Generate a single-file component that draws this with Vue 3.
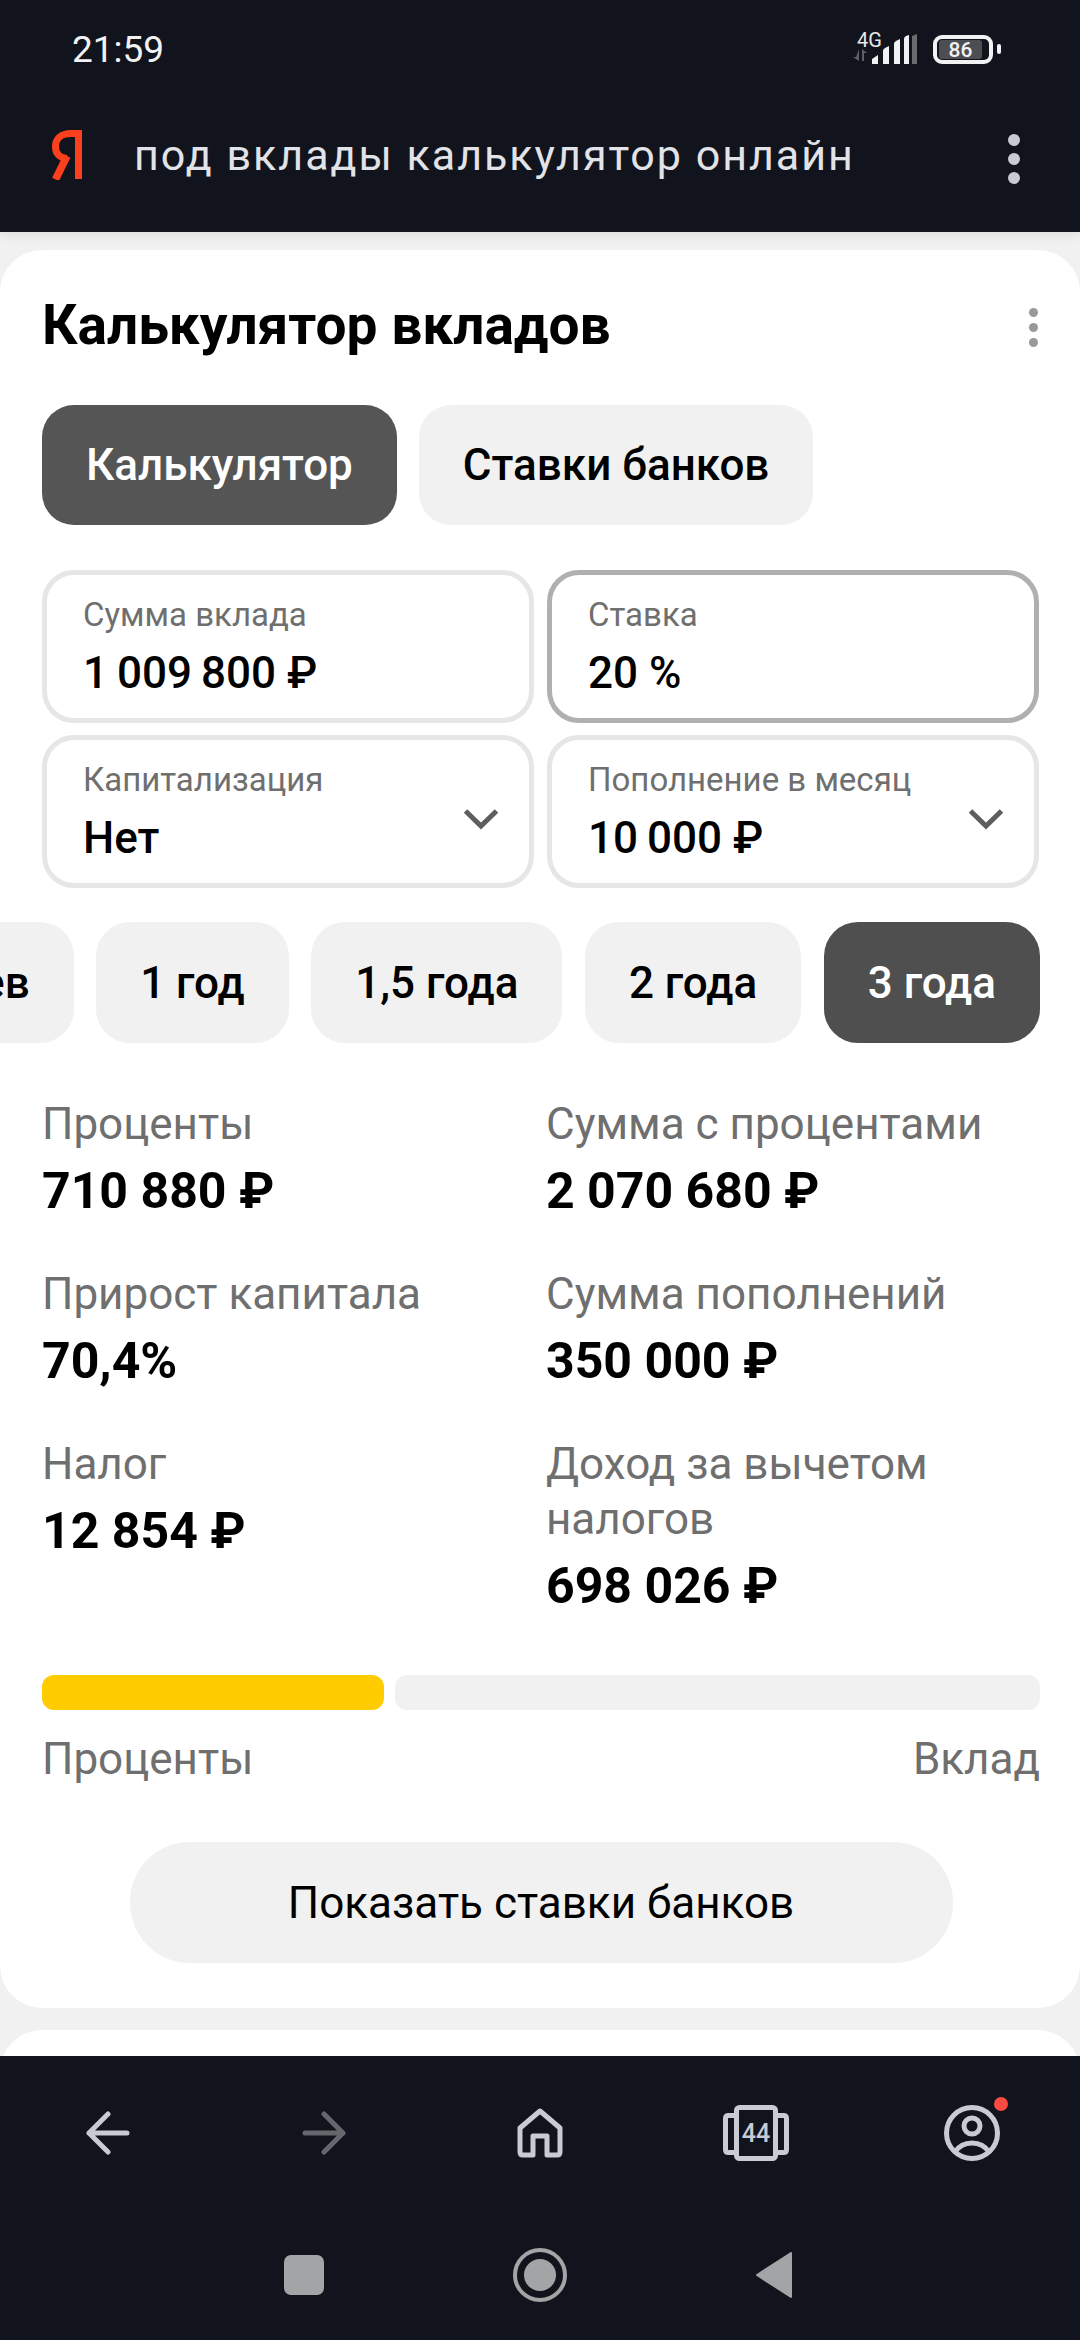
<script setup>
const fields = [
  { label: "Сумма вклада", value: "1\u2009009\u2009800 ₽" },
  { label: "Ставка", value: "20 %", active: true },
  { label: "Капитализация", value: "Нет", select: true },
  { label: "Пополнение в месяц", value: "10\u2009000 ₽", select: true },
];

const periods = ["6 месяцев", "1 год", "1,5 года", "2 года", "3 года"];

const leftStats = [
  { label: "Проценты", value: "710 880 ₽" },
  { label: "Прирост капитала", value: "70,4%" },
  { label: "Налог", value: "12 854 ₽" },
];

const rightStats = [
  { label: "Сумма с процентами", value: "2 070 680 ₽" },
  { label: "Сумма пополнений", value: "350 000 ₽" },
  { label: "Доход за вычетом налогов", value: "698 026 ₽" },
];
</script>

<template>
  <div class="screen">
    <header class="top">
      <div class="status">
        <span class="time">21:59</span>
        <div class="status-icons">
          <div class="net">
            <span class="net-label">4G</span>
            <svg class="signal" width="66" height="31" viewBox="0 0 66 31">
              <path d="M7 15v12l-6-4h3zM10 15v12h2V19h3z" fill="#5f6065" />
              <path d="M20 30v-5l6-4v9zM31 30V17q0-2 2-3l4-2v18zM42 30V10q0-2 2-3l4-2v25zM52 30V5q0-2 2-3l3-1v29z" fill="#f2f2f4" />
              <path d="M60 30V2l5-2v30z" fill="#6b6c70" />
            </svg>
          </div>
          <div class="battery">
            <span class="battery-level">86</span>
          </div>
          <span class="battery-tip"></span>
        </div>
      </div>
      <div class="search">
        <svg class="logo" width="32" height="50" viewBox="0 0 32 50">
          <path d="M27.500 49V3.500H20C10 3.500 4.500 9 4.500 16.500c0 7 4 11.500 11.500 12" fill="none" stroke="#fc3f1d" stroke-width="7" />
          <path d="M16 26 4.500 49.500" fill="none" stroke="#fc3f1d" stroke-width="7.500" />
        </svg>
        <span class="query">под вклады калькулятор онлайн</span>
        <div class="dots">
          <i></i><i></i><i></i>
        </div>
      </div>
    </header>

    <main class="page">
      <section class="card">
        <div class="card-head">
          <h1>Калькулятор вкладов</h1>
          <div class="dots small">
            <i></i><i></i><i></i>
          </div>
        </div>

        <div class="tabs">
          <button class="pill selected">Калькулятор</button>
          <button class="pill">Ставки банков</button>
        </div>

        <div class="fields">
          <div
            v-for="f in fields"
            :key="f.label"
            class="field"
            :class="{ active: f.active }"
          >
            <div class="field-label">{{ f.label }}</div>
            <div class="field-value">{{ f.value }}</div>
            <svg v-if="f.select" class="chevron" width="36" height="22" viewBox="0 0 36 22">
              <path d="M2.500 3 18 18 33.500 3" fill="none" stroke="#5e5e5e" stroke-width="5" />
            </svg>
          </div>
        </div>

        <div class="periods">
          <button
            v-for="p in periods"
            :key="p"
            class="chip"
            :class="{ selected: p === '3 года' }"
          >
            {{ p }}
          </button>
        </div>

        <div class="stats">
          <div class="stats-col">
            <div v-for="s in leftStats" :key="s.label" class="stat">
              <div class="stat-label">{{ s.label }}</div>
              <div class="stat-value">{{ s.value }}</div>
            </div>
          </div>
          <div class="stats-col">
            <div v-for="s in rightStats" :key="s.label" class="stat">
              <div class="stat-label">{{ s.label }}</div>
              <div class="stat-value">{{ s.value }}</div>
            </div>
          </div>
        </div>

        <div class="bar">
          <div class="bar-part yellow"></div>
          <div class="bar-part rest"></div>
        </div>
        <div class="bar-labels">
          <span>Проценты</span>
          <span>Вклад</span>
        </div>

        <button class="show-btn">Показать ставки банков</button>
      </section>
      <section class="card-next"></section>
    </main>

    <footer class="bottom">
      <nav class="browser-nav">
        <svg width="44" height="44" viewBox="0 0 44 44">
          <path d="M41 22H3M22 3 3 22l19 19" fill="none" stroke="#c9cad4" stroke-width="5" stroke-linecap="round" stroke-linejoin="round" />
        </svg>
        <svg width="44" height="44" viewBox="0 0 44 44">
          <path d="M3 22h38M22 3l19 19-19 19" fill="none" stroke="#66676c" stroke-width="5" stroke-linecap="round" stroke-linejoin="round" />
        </svg>
        <svg width="46" height="50" viewBox="0 0 46 50">
          <path d="M3 20 23 3l20 17v24q0 3-3 3H30V28H16v19H6q-3 0-3-3z" fill="none" stroke="#c9cad4" stroke-width="5" stroke-linejoin="round" />
        </svg>
        <div class="tabs-icon">
          <svg width="66" height="56" viewBox="0 0 66 56">
            <rect x="13.500" y="2.500" width="39" height="51" rx="3" fill="none" stroke="#c9cad4" stroke-width="5" />
            <path d="M12 10.500H5.500q-3 0-3 3v31q0 3 3 3H12M54 10.500h6.500q3 0 3 3v31q0 3-3 3H54" fill="none" stroke="#c9cad4" stroke-width="5" />
          </svg>
          <span class="tabs-count">44</span>
        </div>
        <div class="profile">
          <svg width="56" height="56" viewBox="0 0 56 56">
            <circle cx="28" cy="28" r="25.500" fill="none" stroke="#c9cad4" stroke-width="5" />
            <circle cx="28" cy="21" r="8" fill="none" stroke="#c9cad4" stroke-width="5" />
            <path d="M11 47c4-6 10-9 17-9s13 3 17 9" fill="none" stroke="#c9cad4" stroke-width="5" />
          </svg>
          <span class="badge"></span>
        </div>
      </nav>
      <nav class="system-nav">
        <span class="sys-square"></span>
        <span class="sys-circle"><i></i></span>
        <svg width="38" height="46" viewBox="0 0 38 46">
          <path d="M36 1v44L2 23z" fill="#a3a4a6" stroke="#a3a4a6" stroke-width="2" stroke-linejoin="round" />
        </svg>
      </nav>
    </footer>
  </div>
</template>

<style scoped>
.screen {
  width: 1080px;
  height: 2340px;
  display: flex;
  flex-direction: column;
  overflow: hidden;
  background: #f1f1f1;
  font-family: Roboto, "Liberation Sans", sans-serif;
  color: #000;
}

/* top */
.top {
  height: 232px;
  flex-shrink: 0;
  background: #11141c;
  box-shadow: 0 4px 10px rgba(0, 0, 0, 0.08);
  position: relative;
  z-index: 1;
}

.status {
  height: 98px;
  padding: 0 79px 0 72px;
  display: flex;
  align-items: center;
  justify-content: space-between;
  box-sizing: border-box;
}

.time {
  font-size: 37px;
  color: #f2f2f4;
}

.status-icons {
  display: flex;
  align-items: center;
}

.net {
  width: 65px;
  height: 31px;
  position: relative;
  margin-right: 16px;
}

.net-label {
  position: absolute;
  left: 5px;
  top: -6px;
  font-size: 20px;
  color: #e8e8ea;
}

.signal {
  position: absolute;
  left: 0;
  bottom: 0;
}

.battery {
  width: 60px;
  height: 29px;
  box-sizing: border-box;
  border: 4px solid #f2f2f4;
  border-radius: 9px;
  display: flex;
  align-items: center;
  padding-left: 2px;
}

.battery-level {
  flex: 0 0 43px;
  height: 19px;
  background: #4d4e53;
  border-radius: 3px;
  color: #f2f2f4;
  font-size: 21px;
  font-weight: 500;
  line-height: 20px;
  text-align: center;
}

.battery-tip {
  width: 4px;
  height: 10px;
  border-radius: 2px;
  background: #f2f2f4;
  margin-left: 4px;
}

.search {
  height: 114px;
  padding-left: 51px;
  padding-right: 60px;
  display: flex;
  align-items: center;
}

.logo {
  flex-shrink: 0;
}

.query {
  margin-left: 51px;
  font-size: 43px;
  letter-spacing: 2px;
  color: #e2e3e8;
  white-space: nowrap;
  flex: 1;
}

.dots {
  display: flex;
  flex-direction: column;
  gap: 7px;
  margin-top: 8px;
}

.dots i {
  width: 12px;
  height: 12px;
  border-radius: 50%;
  background: #c9cad4;
}

.dots.small {
  gap: 6px;
  margin: 0;
}

.dots.small i {
  width: 9px;
  height: 9px;
  background: #999;
}

/* card */
.page {
  flex: 1;
  padding-top: 18px;
  display: flex;
  flex-direction: column;
  gap: 22px;
  overflow: hidden;
}

.card {
  height: 1758px;
  flex-shrink: 0;
  box-sizing: border-box;
  background: #fff;
  border-radius: 42px;
  padding: 0 40px 0 42px;
  overflow: hidden;
}

.card-next {
  height: 60px;
  flex-shrink: 0;
  background: #fff;
  border-radius: 42px 42px 0 0;
}

.card-head {
  height: 155px;
  display: flex;
  align-items: center;
  justify-content: space-between;
  padding-right: 2px;
  padding-bottom: 6px;
  box-sizing: border-box;
}

.card-head .dots {
  margin-top: 6px;
}

h1 {
  margin: 0;
  font-size: 55px;
  font-weight: 700;
  letter-spacing: 0;
}

button {
  font-family: inherit;
  border: none;
  cursor: pointer;
  color: #000;
}

.tabs {
  display: flex;
  gap: 22px;
}

.pill {
  height: 120px;
  padding: 0 44px;
  border-radius: 32px;
  background: #f1f1f1;
  font-size: 44px;
  font-weight: 500;
}

.selected {
  background: #555;
  color: #fff;
}

.fields {
  margin-top: 45px;
  display: grid;
  grid-template-columns: 492px 492px;
  column-gap: 13px;
  row-gap: 12px;
}

.field {
  height: 153px;
  box-sizing: border-box;
  border: 5px solid #e6e6e6;
  border-radius: 32px;
  padding: 21px 36px 0;
  position: relative;
}

.field.active {
  border-color: #b0b0b0;
}

.field-label {
  font-size: 33px;
  line-height: 38px;
  color: #6f6f6f;
}

.field-value {
  margin-top: 15px;
  font-size: 44px;
  line-height: 48px;
  font-weight: 500;
}

.chevron {
  position: absolute;
  right: 30px;
  top: 68px;
}

.periods {
  margin-top: 34px;
  display: flex;
  justify-content: flex-end;
  gap: 22.5px;
}

.chip {
  flex-shrink: 0;
  height: 121px;
  padding: 0 44px;
  border-radius: 34px;
  background: #f1f1f1;
  font-size: 44px;
  font-weight: 500;
  white-space: nowrap;
}

.chip.selected {
  background: #4f4f4f;
  color: #fff;
}

.stats {
  margin-top: 54px;
  display: grid;
  grid-template-columns: 504px 1fr;
}

.stats-col {
  display: flex;
  flex-direction: column;
  gap: 46px;
}

.stat-label {
  font-size: 44px;
  line-height: 55px;
  color: #6f6f6f;
}

.stat-value {
  margin-top: 9px;
  font-size: 50px;
  line-height: 60px;
  font-weight: 700;
}

.bar {
  margin-top: 59px;
  display: flex;
  gap: 11px;
}

.bar-part {
  height: 35px;
  border-radius: 12px;
}

.yellow {
  width: 342px;
  background: #fc0;
}

.rest {
  flex: 1;
  background: #f1f1f1;
}

.bar-labels {
  margin-top: 24px;
  display: flex;
  justify-content: space-between;
  font-size: 44px;
  line-height: 50px;
  color: #6f6f6f;
}

.show-btn {
  display: block;
  margin: 58px auto 0;
  width: 823px;
  height: 121px;
  border-radius: 60px;
  background: #f1f1f1;
  font-size: 44px;
}

/* bottom */
.bottom {
  height: 284px;
  flex-shrink: 0;
  background: #11141c;
  position: relative;
  z-index: 1;
}

.browser-nav {
  height: 154px;
  display: grid;
  grid-template-columns: repeat(5, 216px);
  align-items: center;
  justify-items: center;
}

.tabs-icon {
  position: relative;
  width: 66px;
  height: 56px;
}

.tabs-count {
  position: absolute;
  inset: 0;
  text-align: center;
  font-size: 25px;
  font-weight: 500;
  line-height: 58px;
  color: #c9cad4;
}

.profile {
  position: relative;
  width: 56px;
  height: 56px;
}

.badge {
  position: absolute;
  right: -8px;
  top: -8px;
  width: 14px;
  height: 14px;
  border-radius: 50%;
  background: #fb4b41;
}

.system-nav {
  height: 130px;
  padding: 0 287px 0 284px;
  display: flex;
  align-items: flex-start;
  justify-content: space-between;
}

.sys-square {
  width: 40px;
  height: 40px;
  margin-top: 45px;
  border-radius: 7px;
  background: #a3a4a6;
}

.sys-circle {
  width: 54px;
  height: 54px;
  box-sizing: border-box;
  margin-top: 38px;
  border: 4px solid #a3a4a6;
  border-radius: 50%;
  display: grid;
  place-items: center;
}

.sys-circle i {
  width: 32px;
  height: 32px;
  border-radius: 50%;
  background: #a3a4a6;
}

.system-nav svg {
  margin-top: 42px;
}
</style>

<style>
html,
body {
  margin: 0;
  background: #f1f1f1;
}
</style>
